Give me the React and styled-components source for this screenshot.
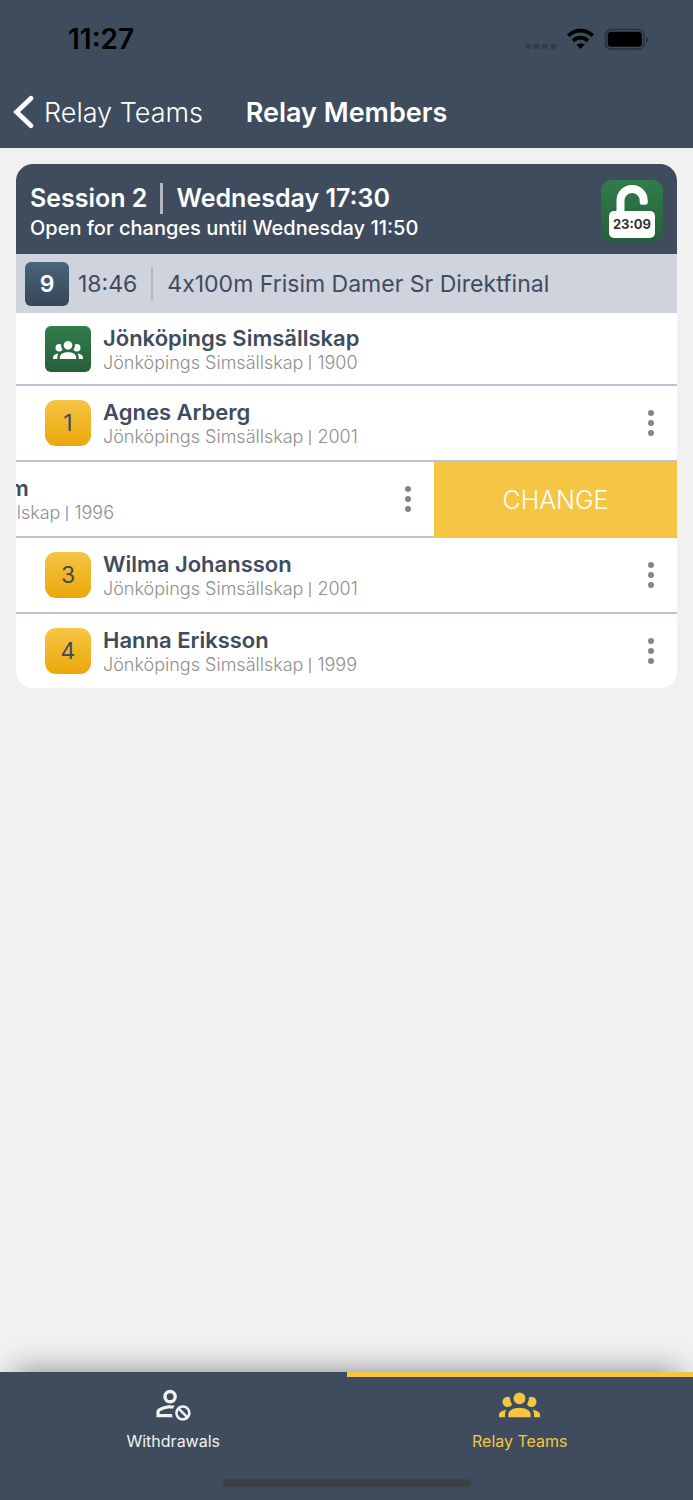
import React from "react";
import styled, { createGlobalStyle } from "styled-components";

const navy = "#3e4c5e";
const yellow = "#f6c544";
const line = "#bcc1d3";

const GlobalStyle = createGlobalStyle`
  * {
    box-sizing: border-box;
  }
  body {
    margin: 0;
    background: #f1f1f1;
    color: ${navy};
    font-family: Inter, "Liberation Sans", sans-serif;
  }
  h1, h2, p {
    margin: 0;
  }
  button {
    padding: 0;
    border: 0;
    background: none;
    font-family: inherit;
    cursor: pointer;
  }
  a {
    color: inherit;
    text-decoration: none;
  }
`;

const Page = styled.div`
  display: flex;
  flex-direction: column;
  min-height: 100vh;
`;

const Header = styled.header`
  background: ${navy};
`;

const StatusBar = styled.div`
  display: flex;
  align-items: center;
  justify-content: space-between;
  height: 78px;
  padding: 0 44px 0 68px;
  color: #000;
`;

const Clock = styled.span`
  font-size: 28px;
  font-weight: 600;
`;

const NavBar = styled.div`
  display: grid;
  grid-template-columns: 1fr auto 1fr;
  align-items: center;
  height: 70px;
  padding: 0 12px 2px;
  color: #fff;
`;

const BackLink = styled.a`
  display: flex;
  align-items: center;
  gap: 8px;
  font-size: 27px;
  font-weight: 300;
  white-space: nowrap;
`;

const Title = styled.h1`
  font-size: 27px;
  font-weight: 600;
  white-space: nowrap;
`;

const Main = styled.main`
  flex: 1;
  padding: 16px;
`;

const Card = styled.section`
  overflow: hidden;
  border-radius: 17px;
  background: #fff;
`;

const SessionHeader = styled.div`
  display: flex;
  align-items: center;
  justify-content: space-between;
  height: 90px;
  padding: 4px 14px 0;
  background: ${navy};
  color: #fff;
`;

const SessionTitle = styled.h2`
  display: flex;
  align-items: center;
  gap: 13px;
  font-size: 25px;
  font-weight: 600;
  line-height: 34px;
`;

const SessionNote = styled.p`
  font-size: 20px;
  font-weight: 500;
  line-height: 26px;
`;

const Divider = styled.span`
  width: ${(props) => props.$width}px;
  height: ${(props) => props.$height}px;
  background: #b6b5c1;
`;

const LockBadge = styled.div`
  display: flex;
  flex-direction: column;
  align-items: center;
  width: 62px;
  height: 62px;
  padding-top: 5px;
  border-radius: 11px;
  background: linear-gradient(#327c4c, #255f39);
`;

const LockTime = styled.span`
  width: 46px;
  border-radius: 5px;
  background: #fff;
  color: #333;
  font-size: 13px;
  font-weight: 700;
  line-height: 27px;
  text-align: center;
`;

const EventRow = styled.div`
  display: flex;
  align-items: center;
  height: 59px;
  padding: 0 9px;
  background: #cfd3dd;
  font-size: 23px;
`;

const EventNumber = styled.span`
  width: 44px;
  margin-right: 9px;
  border-radius: 6px;
  background: linear-gradient(#49647b, #374758);
  color: #fff;
  font-weight: 600;
  line-height: 44px;
  text-align: center;
`;

const EventTime = styled.time`
  margin-right: 14px;
`;

const EventName = styled.span`
  margin-left: 14px;
  font-feature-settings: "calt" 0;
`;

const List = styled.ul`
  margin: 0;
  padding: 0;
  list-style: none;
`;

const Item = styled.li`
  display: flex;
  justify-content: flex-end;
  overflow: hidden;
`;

const Row = styled.div`
  display: flex;
  flex: 0 0 100%;
  align-items: center;
  gap: 12px;
  height: ${(props) => (props.$club ? 73 : 76)}px;
  padding: 0 16px 0 29px;
  border-bottom: 2px solid ${line};

  ${Item}:last-child & {
    height: 74px;
    border-bottom: 0;
  }
`;

const Badge = styled.span`
  display: flex;
  align-items: center;
  justify-content: center;
  width: 46px;
  height: 46px;
  border-radius: ${(props) => (props.$club ? 6 : 11)}px;
  background: ${(props) =>
    props.$club
      ? "linear-gradient(#327c4c, #255f39)"
      : "linear-gradient(#f6c544, #eaa70b)"};
  color: ${(props) => (props.$club ? "#fff" : navy)};
  font-size: 23px;
`;

const Person = styled.div`
  flex: 1;
`;

const Name = styled.p`
  font-size: 22px;
  font-weight: 600;
  line-height: 28px;
`;

const Detail = styled.p`
  display: flex;
  align-items: center;
  gap: 6px;
  color: #8e8e8e;
  font-size: 18px;
  font-weight: 300;
  line-height: 22px;
`;

const MenuButton = styled.button`
  display: flex;
  flex-direction: column;
  align-items: center;
  gap: 4px;
  width: 20px;
`;

const Dot = styled.span`
  width: 6px;
  height: 6px;
  border-radius: 50%;
  background: #858585;
`;

const ChangeButton = styled.button`
  flex: 0 0 243px;
  background: ${yellow};
  color: #fff;
  font-size: 25px;
  font-weight: 300;
`;

const TabBar = styled.nav`
  display: grid;
  grid-template-columns: 1fr 1fr;
  background: ${navy};
  box-shadow: 0 -14px 30px -14px rgba(0, 0, 0, 0.45);
`;

const Tab = styled.a`
  display: flex;
  flex-direction: column;
  align-items: center;
  gap: 3px;
  height: 107px;
  padding-top: 6px;
  border-top: 5px solid ${(props) => (props.$active ? yellow : navy)};
  color: ${(props) => (props.$active ? yellow : "#f2f2f2")};
  font-size: 16px;
  line-height: 28px;
`;

const HomeIndicator = styled.div`
  grid-column: 1 / -1;
  justify-self: center;
  width: 248px;
  height: 8px;
  margin-bottom: 13px;
  border-radius: 4px;
  background: #3d4146;
`;

const StatusIcons = () => (
  <svg width="125" height="24" viewBox="0 0 125 24" aria-hidden="true">
    <g fill="#323d4b">
      <rect x="1" y="17" width="6" height="5" rx="2" />
      <rect x="9.5" y="17" width="6" height="5" rx="2" />
      <rect x="18" y="17" width="6" height="5" rx="2" />
      <rect x="26.7" y="17" width="6" height="5" rx="2" />
    </g>
    <g fill="none" stroke="#000" strokeWidth="3.8">
      <path d="M44.3 8.8a17 17 0 0 1 24.4 0" />
      <path d="M49 13.8a10.6 10.6 0 0 1 15 0" />
    </g>
    <path d="M56.5 22l-4.1-4.2a6 6 0 0 1 8.2 0z" fill="#000" />
    <rect
      x="81.5"
      y="2.6"
      width="38.5"
      height="19.5"
      rx="5.5"
      fill="none"
      stroke="#27303b"
      strokeWidth="1.5"
    />
    <rect x="83.7" y="4.8" width="34.2" height="15" rx="3.5" fill="#000" />
    <path d="M122 9.2v6.5a3.5 3.5 0 0 0 0-6.5z" fill="#27303b" />
  </svg>
);

const BackIcon = () => (
  <svg width="24" height="36" viewBox="0 0 24 36" aria-hidden="true">
    <path
      d="M19 4.2L4.6 18L19 31.7"
      fill="none"
      stroke="#fff"
      strokeWidth="4.8"
      strokeLinecap="round"
    />
  </svg>
);

const OpenLockIcon = () => (
  <svg width="46" height="26" viewBox="0 0 46 26" aria-hidden="true">
    <path
      d="M11.5 26V15.5a11.6 11.6 0 0 1 23.2 0"
      fill="none"
      stroke="#fff"
      strokeWidth="8"
    />
    <path d="M30.7 15h8v2.2a2.5 2.5 0 0 1-2.5 2.5h-3a2.5 2.5 0 0 1-2.5-2.5z" fill="#fff" />
  </svg>
);

const GroupIcon = ({ size }) => (
  <svg width={size} height={size} viewBox="0 0 24 24" fill="currentColor" aria-hidden="true">
    <path d="M12,5.5A3.5,3.5 0 0,1 15.5,9A3.5,3.5 0 0,1 12,12.5A3.5,3.5 0 0,1 8.5,9A3.5,3.5 0 0,1 12,5.5M5,8C5.56,8 6.08,8.15 6.53,8.42C6.38,9.85 6.8,11.27 7.66,12.38C7.16,13.34 6.16,14 5,14A3,3 0 0,1 2,11A3,3 0 0,1 5,8M19,8A3,3 0 0,1 22,11A3,3 0 0,1 19,14C17.84,14 16.84,13.34 16.34,12.38C17.2,11.27 17.62,9.85 17.47,8.42C17.92,8.15 18.44,8 19,8M5.5,18.25C5.5,16.18 8.41,14.5 12,14.5C15.59,14.5 18.5,16.18 18.5,18.25V20H5.5V18.25M0,20V18.5C0,17.11 1.89,15.94 4.45,15.6C3.86,16.28 3.5,17.22 3.5,18.25V20H0M24,20H20.5V18.25C20.5,17.22 20.14,16.28 19.55,15.6C22.11,15.94 24,17.11 24,18.5V20Z" />
  </svg>
);

const WithdrawIcon = () => (
  <svg width="41" height="41" viewBox="0 0 24 24" fill="currentColor" aria-hidden="true">
    <path
      fillRule="evenodd"
      d="M10 4a4 4 0 1 0 0 8a4 4 0 1 0 0-8zM10 6a2 2 0 1 1 0 4a2 2 0 1 1 0-4z"
    />
    <path d="M10 13C7.33 13 2 14.33 2 17V20H11.5A6.5 6.5 0 0 1 11.1 18.1H3.9V17C3.9 16.36 7.03 14.9 10 14.9C10.6 14.9 11.1 14.95 11.6 15A6.5 6.5 0 0 1 12.8 13.3C11.8 13.1 10.8 13 10 13Z" />
    <path d="M17.5 13C15 13 13 15 13 17.5C13 20 15 22 17.5 22C20 22 22 20 22 17.5C22 15 20 13 17.5 13M17.5 14.5C19.16 14.5 20.5 15.84 20.5 17.5C20.5 18.06 20.35 18.58 20.08 19L16 14.92C16.42 14.65 16.94 14.5 17.5 14.5M14.92 16L19 20.08C18.58 20.35 18.06 20.5 17.5 20.5C15.84 20.5 14.5 19.16 14.5 17.5C14.5 16.94 14.65 16.42 14.92 16Z" />
  </svg>
);

const swimmers = [
  { leg: 1, name: "Agnes Arberg", year: 2001 },
  { leg: 2, name: "Emma Lindholm", year: 1996, open: true },
  { leg: 3, name: "Wilma Johansson", year: 2001 },
  { leg: 4, name: "Hanna Eriksson", year: 1999 },
];

const Member = ({ name, year }) => (
  <Person>
    <Name>{name}</Name>
    <Detail>
      Jönköpings Simsällskap
      <Divider $width={2} $height={15} />
      {year}
    </Detail>
  </Person>
);

const App = () => {
  return (
    <Page>
      <GlobalStyle />
      <Header>
        <StatusBar>
          <Clock>11:27</Clock>
          <StatusIcons />
        </StatusBar>
        <NavBar>
          <BackLink href="#teams">
            <BackIcon />
            Relay Teams
          </BackLink>
          <Title>Relay Members</Title>
        </NavBar>
      </Header>
      <Main>
        <Card>
          <SessionHeader>
            <div>
              <SessionTitle>
                Session 2
                <Divider $width={3} $height={31} />
                Wednesday 17:30
              </SessionTitle>
              <SessionNote>Open for changes until Wednesday 11:50</SessionNote>
            </div>
            <LockBadge>
              <OpenLockIcon />
              <LockTime>23:09</LockTime>
            </LockBadge>
          </SessionHeader>
          <EventRow>
            <EventNumber>9</EventNumber>
            <EventTime>18:46</EventTime>
            <Divider $width={2} $height={33} />
            <EventName>4x100m Frisim Damer Sr Direktfinal</EventName>
          </EventRow>
          <List>
            <Item>
              <Row $club>
                <Badge $club>
                  <GroupIcon size={30} />
                </Badge>
                <Member name="Jönköpings Simsällskap" year={1900} />
              </Row>
            </Item>
            {swimmers.map((swimmer) => (
              <Item key={swimmer.leg}>
                <Row>
                  <Badge>{swimmer.leg}</Badge>
                  <Member name={swimmer.name} year={swimmer.year} />
                  <MenuButton type="button" aria-label={"Options for " + swimmer.name}>
                    <Dot />
                    <Dot />
                    <Dot />
                  </MenuButton>
                </Row>
                {swimmer.open && <ChangeButton type="button">CHANGE</ChangeButton>}
              </Item>
            ))}
          </List>
        </Card>
      </Main>
      <TabBar>
        <Tab href="#withdrawals">
          <WithdrawIcon />
          Withdrawals
        </Tab>
        <Tab href="#teams" $active aria-current="page">
          <GroupIcon size={41} />
          Relay Teams
        </Tab>
        <HomeIndicator />
      </TabBar>
    </Page>
  );
};

export default App;
